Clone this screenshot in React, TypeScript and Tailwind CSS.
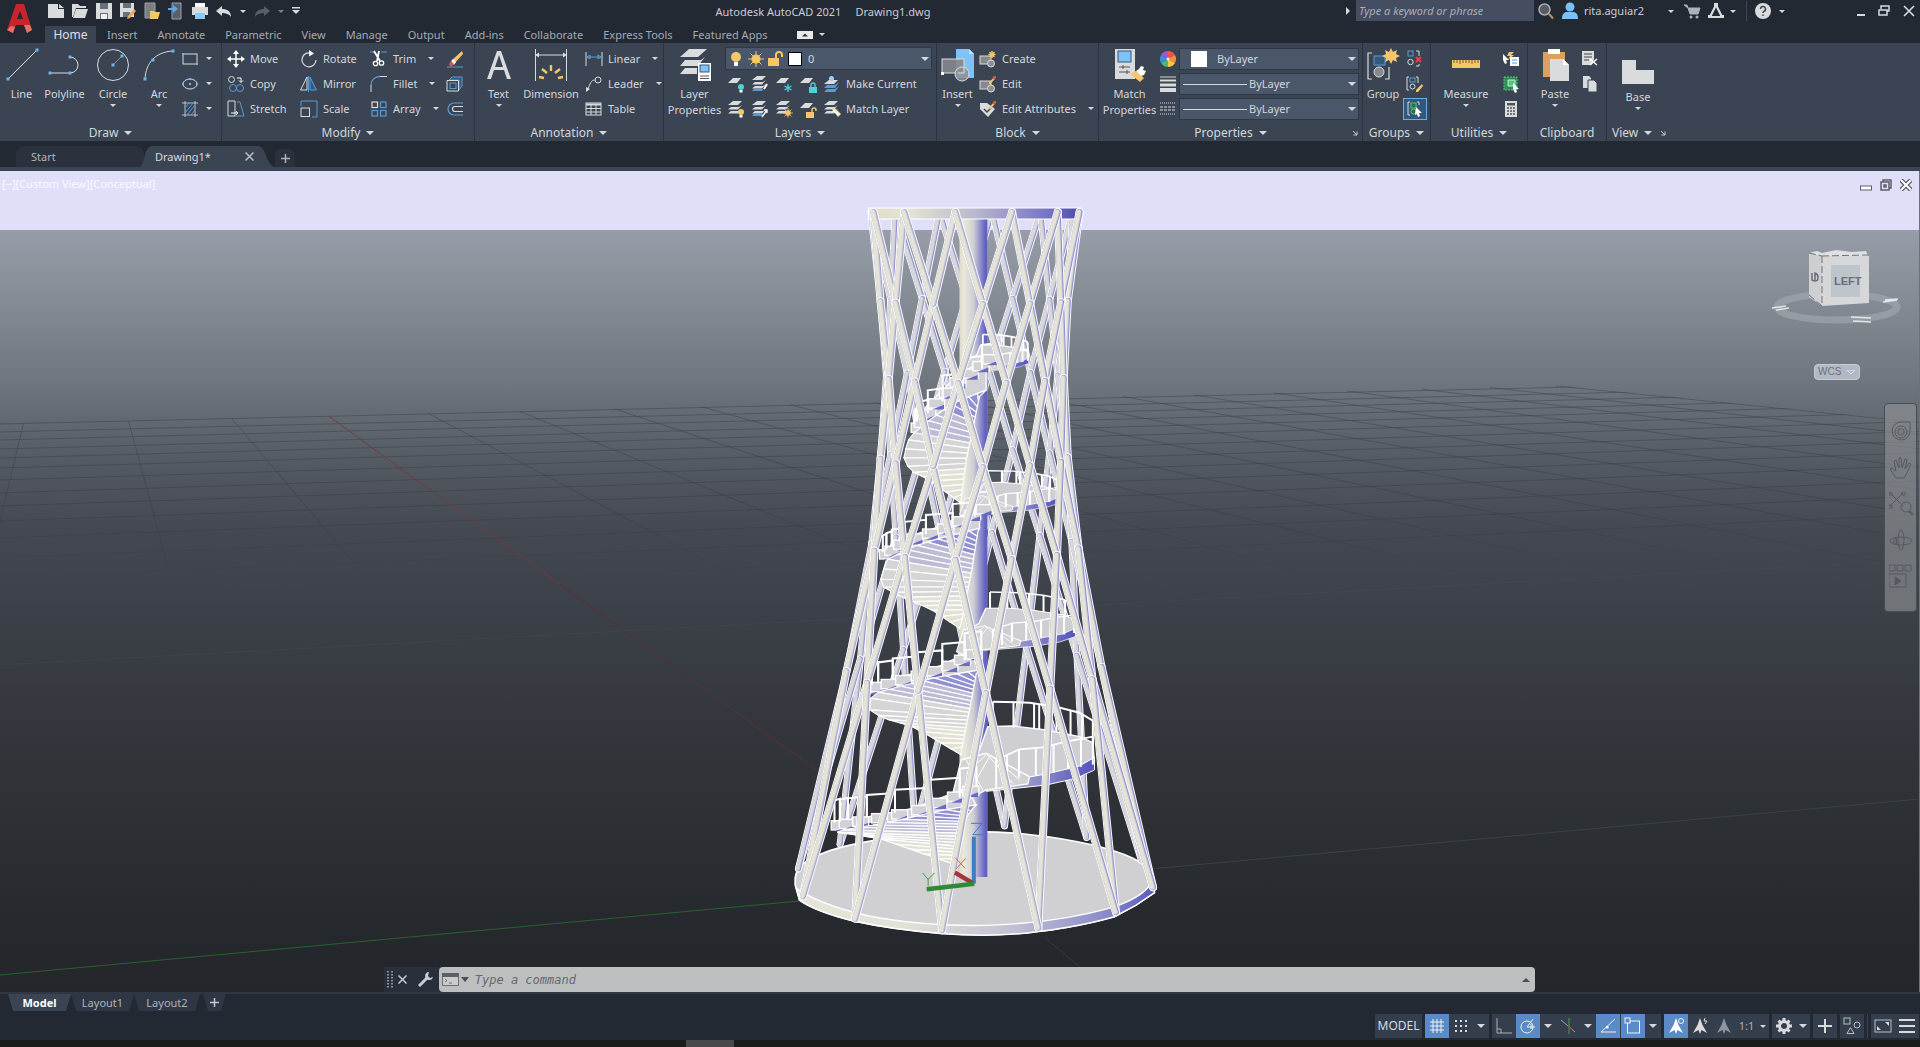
import React from "react";

type Pt = [number, number];
type Kids = { children?: React.ReactNode };

/* ---------- shared bits ---------- */

const G = "#d9dbdd";
const B = "#5b9bd5";
const Y = "#f5c66a";

function Ic({ s = 16, children }: Kids & { s?: 16 | 32 }) {
  const size = s === 32 ? "size-8" : "size-4";
  return (
    <svg viewBox={s === 32 ? "0 0 32 32" : "0 0 16 16"} className={`${size} shrink-0 overflow-visible`} fill="none" stroke="none" aria-hidden="true">
      {children}
    </svg>
  );
}

function Arrow({ big = false }: { big?: boolean }) {
  return big ? (
    <svg viewBox="0 0 8 4" className="h-1 w-2 shrink-0" aria-hidden="true"><path d="M0 0h8L4 4z" fill="#d5d9de" /></svg>
  ) : (
    <svg viewBox="0 0 6 3" className="h-[3px] w-1.5 shrink-0" aria-hidden="true"><path d="M0 0h6L3 3z" fill="#d5d9de" /></svg>
  );
}

function Panel({ title, width, children, noArrow, launcher }: Kids & { title: string; width: string; noArrow?: boolean; launcher?: boolean }) {
  return (
    <section aria-label={title} className={`${width} flex shrink-0 flex-col border-r border-[#2a323e] pt-[3px]`}>
      <div className="flex h-[76px]">{children}</div>
      <div className="relative flex h-[19px] items-center justify-center pt-0.5 text-[12px]">
        <button type="button" className="flex items-center gap-1.5 whitespace-nowrap">
          {title}
          {!noArrow && <Arrow big />}
        </button>
        {launcher && (
          <button type="button" aria-label={`${title} settings`} className="absolute right-1">
            <svg viewBox="0 0 6 6" className="size-1.5"><path d="M1 1l4 4M5 1.500v3.500H1.500" stroke="#c8ccd2" fill="none" /></svg>
          </button>
        )}
      </div>
    </section>
  );
}

function Big({ label, width, arrow, icon }: { label: string[]; width: string; arrow?: boolean; icon: React.ReactNode }) {
  return (
    <button type="button" className={`${width} flex shrink-0 flex-col items-center pt-[3px] text-[11px]`}>
      {icon}
      <span className="mt-[5px] flex flex-col whitespace-nowrap leading-4">
        {label.map((l) => <span key={l}>{l}</span>)}
      </span>
      {arrow && <span className="mt-0.5"><Arrow /></span>}
    </button>
  );
}

function Row({ icon, label, arrow, gap = "gap-1.5" }: { icon: React.ReactNode; label?: string; arrow?: boolean; gap?: string }) {
  return (
    <button type="button" className={`flex h-[25px] items-center whitespace-nowrap ${gap}`} aria-label={label ?? "tool"}>
      {icon}
      {label && <span>{label}</span>}
      {arrow && <span className={label ? "ml-1.5" : ""}><Arrow /></span>}
    </button>
  );
}

const Col = ({ width, children }: Kids & { width: string }) => <div className={`${width} flex shrink-0 flex-col items-start`}>{children}</div>;

/* ---------- icons ---------- */

const dot = (x: number, y: number, r = 1) => <rect key={`${x}-${y}`} x={x - r} y={y - r} width={2 * r} height={2 * r} fill="#6db3ee" />;

const LineI = <Ic s={32}><path d="M2 30L31 1" stroke={G} />{dot(2, 30, 1.5)}{dot(31, 1, 1.5)}</Ic>;
const PolyI = <Ic s={32}><path d="M0 24h21a8 8 0 0 0 0-16" stroke={G} />{dot(1, 24, 1.5)}{dot(21, 24, 1.5)}{dot(21, 8, 1.5)}</Ic>;
const CircI = <Ic s={32}><circle cx="16" cy="16" r="15.500" stroke={G} /><path d="M16 16l9-9" stroke={B} />{dot(16, 16, 1.5)}{dot(25, 7, 1.5)}</Ic>;
const ArcI = <Ic s={32}><path d="M2 30C3 14 12 3 30 2" stroke={G} />{dot(2, 30, 1.5)}{dot(10, 11, 1.5)}{dot(30, 2, 1.5)}</Ic>;
const RectI = <Ic><rect x="1" y="3" width="14" height="10" stroke={G} />{dot(1, 3)}{dot(15, 13)}</Ic>;
const EllI = <Ic><ellipse cx="8" cy="8" rx="7" ry="5" stroke={G} />{dot(8, 8)}{dot(1, 8)}{dot(15, 8)}{dot(8, 3)}</Ic>;
const HatchI = <Ic><path d="M3 0v16M13 0v16M0 2h16M0 14h16" stroke={G} strokeWidth=".8" /><path d="M3 7l4-5M3 12l8-10M5 14l8-10M9 14l4-5" stroke={B} /></Ic>;
const MoveI = <Ic><path d="M8 1v14M1 8h14" stroke="#fff" strokeWidth="1.500" /><path d="M8-1l3 4H5zM8 17l3-4H5zM-1 8l4-3v6zM17 8l-4-3v6z" fill="#fff" /></Ic>;
const RotI = <Ic><path d="M11 2.500A7 7 0 1 0 15 9" stroke={G} strokeWidth="1.200" /><path d="M8-1l5 3.500-5 3z" fill="#fff" /></Ic>;
const TrimI = <Ic><path d="M-1 1h4M10 1h6" stroke={B} /><path d="M3 0l6 10M8 0L6 10" stroke="#fff" strokeWidth="1.800" /><circle cx="4.500" cy="12.500" r="2.200" stroke="#fff" strokeWidth="1.300" /><circle cx="10.500" cy="12" r="2.200" stroke="#fff" strokeWidth="1.300" /></Ic>;
const EraseI = <Ic><path d="M0 16h16" stroke={B} /><path d="M15 0l1 3-9 10-3-3z" fill={Y} /><path d="M6 8l3 3-2 3-3-3z" fill="#fff" /><path d="M4 10l3 3-2 2H3l-1-2z" fill="#e0564d" /></Ic>;
const CopyI = <Ic><circle cx="3.500" cy="3.500" r="3" stroke={G} /><circle cx="5" cy="12" r="3.500" stroke={B} /><circle cx="12" cy="12" r="3.500" stroke={B} /><path d="M9 2h4v4M11 4.500l2 2 2-2" stroke="#fff" /></Ic>;
const MirrorI = <Ic><path d="M6 1v13H-.5z" stroke={G} /><path d="M9 1v13h6.500z" stroke={B} fill="#35597d" /><path d="M7.500 0v16" stroke={B} /></Ic>;
const FilletI = <Ic><path d="M0 16V9M9 .5h7" stroke={G} /><path d="M0 9C0 4 4 .5 9 .5" stroke={B} strokeWidth="1.300" /></Ic>;
const BoxI = <Ic><path d="M2 4l3-3h10v9l-3 4V4z" stroke={B} fill="#35597d" /><path d="M0 4.500h11.500V15H0z" stroke={G} fill="#3b4453" /><rect x="3" y="7" width="6" height="5.500" stroke={B} /></Ic>;
const StretchI = <Ic><path d="M0 0h7v15H0z" stroke={G} /><path d="M9 1h3l4 14H7" stroke={B} /><path d="M3 12h7M8 10l2 2-2 2" stroke="#fff" /></Ic>;
const ScaleI = <Ic><path d="M0 5V0h16v16h-5" stroke={B} /><rect x="0" y="7" width="8.500" height="8.500" stroke={G} /></Ic>;
const ArrayI = <Ic><rect x="1" y="1" width="5.500" height="5.500" stroke={G} strokeWidth="1.200" /><rect x="9.500" y="1" width="5.500" height="5.500" stroke={B} strokeWidth="1.200" /><rect x="1" y="9.500" width="5.500" height="5.500" stroke={B} strokeWidth="1.200" /><rect x="9.500" y="9.500" width="5.500" height="5.500" stroke={B} strokeWidth="1.200" /></Ic>;
const OffsetI = <Ic><path d="M16 2H7a6 6 0 0 0 0 12h9" stroke={B} strokeWidth="1.200" /><path d="M16 5.500H8a2.500 2.500 0 0 0 0 5h8" stroke={G} strokeWidth="1.200" /></Ic>;
const TextI = <Ic s={32}><path d="M4 30L14 2h4l10 28h-4l-3-9H11l-3 9zM12 18h8l-4-12z" fill={G} /></Ic>;
const DimI = <Ic s={32}><path d="M.5 0v32M31.500 0v32M2 6h28" stroke={G} /><path d="M0 6l4-2.500v5zM32 6l-4-2.500v5z" fill={G} /><path d="M4 28l5 1M7 20l5 4M16 16v6M25 20l-5 4M28 28l-5 1" stroke={Y} strokeWidth="2.400" /></Ic>;
const LinearI = <Ic><path d="M0 1v14M16 1v14" stroke={G} /><path d="M1 6h14M1 6l3-2v4zM15 6l-3-2v4z" stroke={B} /></Ic>;
const LeaderI = <Ic><circle cx="12" cy="4" r="3" stroke={G} /><path d="M9 4C5 4 4 8 2 13" stroke={G} /><path d="M0 16v-5l4 2z" fill={G} /></Ic>;
const TableI = <Ic><rect x="0" y="2" width="15" height="12" stroke={G} /><path d="M0 3.500h15" stroke={G} strokeWidth="2" /><path d="M0 7.500h15M0 11h15M5 4v10M10 4v10" stroke={G} /></Ic>;
const LayerPropI = (
  <Ic s={32}>
    <path d="M10 0h18l-9 8H1z" fill={G} /><path d="M6 11h16l4-3-7 9H1z" fill={G} /><path d="M6 19h12v6H1z" fill={G} />
    <rect x="19" y="14" width="13" height="18" fill="#fff" /><rect x="21" y="16" width="9" height="7" fill="#7ec2f7" stroke="#35597d" /><path d="M21 27h9M21 29.500h9" stroke="#555" />
  </Ic>
);
const Sheet = <path d="M5 2h8L9 7H0z" fill={G} />;
const Stack = <><path d="M5 0h9l-4 4H0z" fill={G} /><path d="M3 6h8l3-2-4 4.500H0zM3 10h8l3-2-4 4.500H0z" fill={G} /></>;
const Bulb = ({ c }: { c: string }) => <><circle cx="13" cy="11" r="3" fill={c} /><rect x="11.500" y="14" width="3" height="2.500" fill="#fff" /></>;
const Lock = ({ c }: { c: string }) => <><rect x="9" y="11" width="8" height="6" fill={c} /><path d="M11 11V9a2 2 0 0 1 4 0v2" stroke={c} strokeWidth="1.400" /></>;
const layerRow1 = [
  <Ic key="a">{Sheet}<Bulb c="#4dd2d8" /></Ic>,
  <Ic key="b">{Stack}<path d="M2 13h9l3-4-4 6H0z" fill={B} /><path d="M15 8l-3 5" stroke="#fff" strokeWidth="2" /></Ic>,
  <Ic key="c">{Sheet}<path d="M12 8v8M8.500 10l7 4M15.500 10l-7 4" stroke="#4dd2d8" strokeWidth="1.300" /></Ic>,
  <Ic key="d">{Sheet}<Lock c="#4dd2d8" /></Ic>,
];
const layerRow2 = [
  <Ic key="a">{Stack}<Bulb c={Y} /></Ic>,
  <Ic key="b">{Stack}<path d="M2 13h9l3-4-4 6H0z" fill={B} /><path d="M10 16l5-7M12 9h3v3" stroke="#fff" strokeWidth="1.300" /></Ic>,
  <Ic key="c">{Stack}<circle cx="12" cy="12" r="2.800" fill={Y} /><path d="M12 7v10M7 12h10M8.500 8.500l7 7M15.500 8.500l-7 7" stroke={Y} strokeWidth=".8" /></Ic>,
  <Ic key="d">{Sheet}<rect x="6" y="11" width="8" height="6" fill={Y} /><path d="M12 11V9a2 2 0 0 1 4 0v1" stroke={Y} strokeWidth="1.400" /></Ic>,
];
const MakeI = <Ic><path d="M5 4h9l-4 4H0z" fill={G} /><path d="M3 9h8l4-3-4 6H0z" fill={B} /><path d="M3 13h8l4-3-4 6H0z" fill={B} /><circle cx="7.500" cy="2.500" r="2.500" fill="#9fd0f7" /></Ic>;
const MatchLI = <Ic>{Stack}<path d="M8 8l3-1 6 6-3 3z" fill="#f2d9a0" /><path d="M9 9l6 5" stroke="#fff" strokeWidth="2" /></Ic>;
const InsertI = <Ic s={32}><path d="M14 0h13l5 5v24H14z" fill="#7ec2f7" /><path d="M27 0v5h5z" fill="#cde6fb" /><rect x="0" y="10" width="22" height="14" fill="#85888c" fillOpacity=".9" stroke={G} /><circle cx="20" cy="25" r="7" fill="#8d9095" fillOpacity=".85" stroke={G} /><path d="M16 24h6v-6" stroke={G} /><rect x="-1" y="23" width="3" height="3" fill="#fff" /></Ic>;
const blockBase = <><rect x="0" y="5" width="11" height="8" fill="#85888c" stroke={G} /><circle cx="11" cy="12.500" r="3.500" fill="#8d9095" stroke={G} /></>;
const CreateI = <Ic>{blockBase}<path d="M12 0v7M8.500 3.500h7M9.500 1l5 5M14.500 1l-5 5" stroke={Y} strokeWidth="1.400" /></Ic>;
const pencil = <><path d="M15 0l1 1.500-6 7-1.500-1.500z" fill={Y} /><path d="M13.500 0l2.500 1-1.500 3-2-1.500z" fill="#e0564d" /></>;
const EditI = <Ic>{blockBase}{pencil}</Ic>;
const AttrI = <Ic><path d="M0 2h7l8 6-7 8-8-8z" fill={G} /><path d="M4 8l3 3 4-4" stroke="#444b57" strokeWidth="1.500" />{pencil}</Ic>;
const MatchI = <Ic s={32}><rect x="1" y="0" width="20" height="30" fill={G} /><rect x="4" y="2" width="13" height="11" fill="#7ec2f7" stroke="#35597d" /><path d="M5 18h11M5 23h11M9 16v4M13 21v4" stroke="#555" /><path d="M16 25l6-3 8 7-4 4z" fill={Y} /><path d="M22 22l3-2 2-3 3 1-1 3 3 1-2 4-3 1z" fill="#fff" /></Ic>;
const WheelI = (
  <Ic>
    {[["#f0554b", 0], ["#f58f3c", 60], ["#f4c93f", 120], ["#4fb86a", 180], ["#3f8fe0", 240], ["#9a5bd0", 300]].map(([c, a]) => (
      <path key={c as string} d="M8 8V0a8 8 0 0 1 6.930 4z" fill={c as string} transform={`rotate(${a} 8 8)`} />
    ))}
    <circle cx="8" cy="8" r="1.500" fill="#f3efe6" />
  </Ic>
);
const WeightI = <Ic><path d="M0 1h16" stroke={G} /><path d="M0 4.500h16" stroke={G} strokeWidth="2" /><path d="M0 9h16" stroke={G} strokeWidth="3" /><path d="M0 14h16" stroke={G} strokeWidth="4" /></Ic>;
const TypeI = <Ic><path d="M0 2h16M0 13h16" stroke={G} strokeDasharray="1 1" /><path d="M0 6h16M0 9h16" stroke={G} strokeDasharray="3 1" /></Ic>;
const GroupI = <Ic s={32}><path d="M5 4H1v26h4M18 30h4V18" stroke={G} strokeWidth="1.200" /><rect x="7" y="7" width="11" height="9" fill="#35597d" stroke={B} /><circle cx="12" cy="23" r="5" fill="#85888c" stroke={G} /><path d="M24-1l2 4 4-2-1 4 4 2-4 2 1 4-4-2-2 4-2-4-4 2 1-4-4-2 4-2-1-4 4 2z" fill={Y} /></Ic>;
const UngI = <Ic><rect x="1" y="0" width="5" height="5" stroke={B} /><circle cx="3.500" cy="11" r="2.700" stroke={G} /><path d="M9 0h3v5M9 15h3v-2" stroke={G} /><path d="M9 6l5 5M14 6l-5 5" stroke="#e8404a" strokeWidth="2" /></Ic>;
const GedI = <Ic><path d="M2 1H0v13h2M9 1h2v6" stroke={G} /><rect x="3" y="2" width="5" height="4" stroke={B} /><circle cx="5.500" cy="10.500" r="2.500" stroke={G} /><path d="M15 8l1 2-5 6-2 0 0-2z" fill={Y} /></Ic>;
const GselI = <Ic><path d="M3 1H1v13h2M10 1h2v3" stroke={G} /><rect x="4" y="2" width="5" height="5" stroke="#52c47a" fill="#2d6b49" /><circle cx="6.500" cy="10.500" r="2.500" stroke="#52c47a" fill="#2d6b49" /><path d="M9 6l6 6-3 0 1 3-2 1-1-3-2 1z" fill="#fff" /></Ic>;
const MeasI = <Ic s={32}><rect x="2" y="11" width="28" height="8" fill={Y} /><path d="M4 11v3M7 11v3M10 11v4M13 11v3M16 11v3M19 11v3M22 11v4M25 11v3M28 11v3" stroke="#7a5a20" /></Ic>;
const QselI = <Ic><path d="M6 1l5 0-3 3 3 0-6 5 2-4H4z" fill={Y} /><rect x="7" y="6" width="9" height="9" fill="#fff" /><path d="M9 9h5M9 12h5" stroke={B} /><path d="M0 3l6 6-3 0 1 3-2 1-2-4z" fill="#fff" /></Ic>;
const SelI = <Ic><rect x="1" y="1" width="13" height="13" fill="#2f8a56" stroke="#52c47a" strokeDasharray="2 1" /><path d="M5 4h7v6H5z" fill="#52c47a" stroke="#bff0d0" /><path d="M10 7l6 6-3 0 1 3-2 1-2-4z" fill="#fff" /></Ic>;
const CalcI = <Ic><rect x="2" y="0" width="12" height="16" fill={G} /><rect x="4" y="2" width="8" height="2.500" fill="#555" /><path d="M4 7h8M4 10h8M4 13h8" stroke="#555" strokeWidth="1.500" strokeDasharray="2 1" /></Ic>;
const PasteI = <Ic s={32}><rect x="4" y="3" width="22" height="25" fill="#d9a05f" /><rect x="9" y="0" width="12" height="5" fill="#fff" /><path d="M11 10h13l6 6v16H11z" fill={G} /><path d="M24 10v6h6z" fill="#fff" /></Ic>;
const CutI = <Ic><path d="M0 0h12v9l-3 5H0z" fill={G} /><path d="M2 3h8M2 6h8M2 9h5" stroke="#444" /><path d="M8 8l7 6M15 8l-7 6" stroke="#fff" strokeWidth="1.400" /></Ic>;
const Copy2I = <Ic><path d="M1 0h6l2 2v10H1z" fill={G} /><path d="M6 4h6l3 3v9H6z" fill={G} stroke="#3b4453" /></Ic>;
const BaseI = <Ic s={32}><path d="M0 8h14v10h18v14H0z" fill={G} /></Ic>;

/* quick access tools */
const qat = [
  ["New", <Ic key="n"><path d="M0 1h10v5h6v9H0z" fill={G} /><path d="M11 1l5 4h-5z" fill={G} /></Ic>],
  ["Open", <Ic key="o"><path d="M0 1h6l2 2h6v2H4L1 14H0z" fill={G} /><path d="M4 6h12l-3 9H1z" fill={G} /></Ic>],
  ["Save", <Ic key="s"><path d="M0 0h16v16H0z" fill={G} /><path d="M4 0h8v6H4zM4 10h8v6H4z" fill="#6b7178" /><path d="M5 11h6v5H5z" fill="#eee" /></Ic>],
  ["Save As", <Ic key="sa"><path d="M0 0h14v14H0z" fill={G} /><path d="M3 0h8v5H3zM3 9h7v5H3z" fill="#6b7178" /><path d="M14 6l2 2-6 7-3 1 1-3z" fill="#eaa95c" /></Ic>],
  ["Open from Web", <Ic key="ow"><path d="M1 0h10v15H1z" fill="#7a7f86" stroke="#9ca1a8" /><path d="M6 8h4l1 1h5l-2 7H6z" fill={Y} /></Ic>],
  ["Save to Web", <Ic key="sw"><path d="M4 0h9v16H4z" fill="#59606a" stroke="#9ca1a8" /><path d="M0 5h5V2l5 4-5 4V7H0z" fill="#5aa9ea" /></Ic>],
  ["Plot", <Ic key="p"><path d="M3 0h10v4H3z" fill="#fff" /><path d="M0 4h16v8H0z" fill={G} /><path d="M3 10h10v6H3z" fill="#8cc8f5" /></Ic>],
] as [string, React.ReactNode][];

/* ---------- tower model ---------- */

const LV = [
  { y: 212, r: 106, b: 0 },
  { y: 301, r: 94, b: 3 },
  { y: 377, r: 90, b: 6 },
  { y: 458, r: 94, b: 9 },
  { y: 546, r: 105, b: 14 },
  { y: 669, r: 128, b: 24 },
  { y: 878, r: 180, b: 53 },
];

function node(l: number, deg: number): Pt {
  const a = (deg * Math.PI) / 180;
  const v = LV[l];
  return [975 + v.r * Math.sin(a) * (1 + 0.04 * Math.cos(a)), v.y + v.b * Math.cos(a)];
}

type Bar = { a: Pt; b: Pt; depth: number; side: number };
const bars: Bar[] = [];
for (let l = 0; l < 6; l++) {
  for (let k = 0; k < 12; k++) {
    const t = (l % 2 === 0 ? -10 : 5) + 30 * k;
    for (const d of [-15, 15]) {
      const m = ((t + d / 2) * Math.PI) / 180;
      bars.push({ a: node(l, t), b: node(l + 1, t + d), depth: Math.cos(m), side: Math.sin(m) });
    }
  }
}
bars.sort((p, q) => p.depth - q.depth);

function BarLine({ bar }: { bar: Bar }) {
  const { a, b, depth, side } = bar;
  const back = depth < 0;
  const w = back ? 7 : 8;
  const line = (dx: number, c: string, sw: number) => (
    <line x1={a[0] + dx} y1={a[1]} x2={b[0] + dx} y2={b[1]} stroke={c} strokeWidth={sw} strokeLinecap="round" />
  );
  const shade = back || side > 0.5 ? "#8f8ed0" : "#a5a4d0";
  return (
    <g>
      {line(0, "#f8f8ff", w)}
      {line(0, shade, w - 2)}
      {line(-0.5, "#c9c9d4", w - 3)}
      {line(-1, back ? "#d8d8da" : "#e4e3d6", w - 4)}
    </g>
  );
}

function along(p: Pt[], t: number): Pt {
  const len: number[] = [0];
  for (let i = 1; i < p.length; i++) len.push(len[i - 1] + Math.hypot(p[i][0] - p[i - 1][0], p[i][1] - p[i - 1][1]));
  const d = t * len[len.length - 1];
  let i = 1;
  while (i < p.length - 1 && len[i] < d) i++;
  const f = (d - len[i - 1]) / (len[i] - len[i - 1]);
  return [p[i - 1][0] + f * (p[i][0] - p[i - 1][0]), p[i - 1][1] + f * (p[i][1] - p[i - 1][1])];
}
const pts = (p: Pt[]) => p.map((q) => q.join(",")).join(" ");

/* a flight seen from below on the left of the column, with treads and railing above */
function Flight({ outer, inner, top, n, rail }: { outer: Pt[]; inner: Pt[]; top: Pt[]; n: number; rail: number }) {
  const idx = Array.from({ length: n + 1 }, (_, i) => i / n);
  const steps = [0, 0.06, 0.16, 0.3, 0.45, 0.6, 0.75, 0.88, 1];
  const posts = [0, 0.04, 0.1, 0.24, 0.45, 0.72, 0.95];
  return (
    <g>
      <polygon points={pts([...top, ...outer.slice(0, 3)])} fill="#d2d2d6" stroke="#fff" strokeWidth={4} />
      {steps.map((t) => {
        const [x, y] = along(top, t);
        return (
          <g key={t}>
            <rect x={x - 10} y={y - 6} width={48} height={28} fill="#d2d2d6" stroke="#fff" strokeWidth={4} />
            <path d={`M${x} ${y + 26}h36v-14z`} fill="#6a69c4" />
          </g>
        );
      })}
      {posts.map((t, i) => {
        const [x, y] = along(top, t);
        const nx = i < posts.length - 1 ? along(top, posts[i + 1])[0] : x + 50;
        return <path key={t} d={`M${x} ${y}v${-rail}L${nx} ${y - rail - 6}v${rail * 0.9}`} fill="none" stroke="#fff" strokeWidth={6} />;
      })}
      {idx.slice(0, -1).map((t, i) => {
        const u = idx[i + 1];
        const fill = t < 0.25 ? "#9291cf" : t < 0.45 ? "#bdbcd4" : t < 0.7 ? "#d6d5d6" : "#e3e1d3";
        return <polygon key={t} points={pts([along(outer, t), along(outer, u), along(inner, u), along(inner, t)])} fill={fill} stroke="#fff" strokeWidth={3.5} />;
      })}
    </g>
  );
}

/* landing on the right of the column */
function Landing({ heavy = 1 }: { heavy?: number }) {
  const back: Pt[] = [[640, 425], [750, 428], [830, 440], [900, 458], [940, 482]];
  const front: Pt[] = [[650, 600], [720, 568], [790, 562], [860, 545], [940, 530]];
  return (
    <g>
      <polygon points="560,600 600,570 625,500 700,498 800,510 900,530 940,548 945,605 900,632 800,655 700,668 620,675 560,650" fill="#cfcfd3" stroke="#fff" strokeWidth={4 * heavy} />
      <polygon points="620,672 700,660 800,642 900,618 945,592 945,630 890,655 800,675 700,686 620,694" fill="url(#rim)" stroke="#fff" strokeWidth={3} />
      <polygon points="545,600 620,580 750,650 745,672 620,690 560,720 520,700" fill="#d4d3d4" stroke="#fff" strokeWidth={4} />
      <path d="M560 640l60-55M590 660l40-70M620 580l80 90M640 590l80 70M560 600l50 90" stroke="#fff" strokeWidth={3} fill="none" />
      <polyline points={pts(back)} fill="none" stroke="#fff" strokeWidth={6 * heavy} />
      {[0, 0.2, 0.4, 0.45, 0.62, 0.76, 0.88, 1].map((t) => {
        const [x, y] = along(back, t);
        return <line key={t} x1={x} y1={y} x2={x} y2={y + 76} stroke="#fff" strokeWidth={6 * heavy} />;
      })}
      <polyline points={pts(front)} fill="none" stroke="#fff" strokeWidth={5 * heavy} />
      {[0, 0.12, 0.25, 0.42, 0.6, 0.75, 0.88, 1].map((t) => {
        const [x, y] = along(front, t);
        return <line key={t} x1={x} y1={y} x2={x} y2={y + 84} stroke="#fff" strokeWidth={6 * heavy} />;
      })}
    </g>
  );
}

function Tower() {
  return (
    <g>
      <g transform="translate(780 560) scale(.33333)">
        <path d="M47 955C50 920 80 900 130 880C200 850 330 832 450 820C560 812 680 815 760 825C880 838 1000 865 1060 895C1100 915 1118 940 1118 965L1125 998L1070 1035L1005 1070C900 1100 800 1112 778 1114C680 1128 580 1128 483 1120C380 1112 300 1100 222 1083C140 1062 90 1042 60 1020L47 975z" fill="#d0d0d3" stroke="#fff" strokeWidth={5} />
        <path d="M50 985C110 1025 200 1055 300 1074C420 1094 520 1098 620 1096C760 1092 900 1070 1000 1042C1060 1022 1100 1000 1118 965L1125 998L1070 1035L1005 1070C900 1100 800 1112 778 1114C680 1128 580 1128 483 1120C380 1112 300 1100 222 1083C140 1062 90 1042 60 1020z" fill="url(#base)" stroke="#fff" strokeWidth={4} />
      </g>
      {bars.filter((b) => b.depth < 0).map((b, i) => <BarLine key={i} bar={b} />)}
      <rect x="960" y="219" width="28" height="658" fill="url(#column)" />
      <g transform="translate(780 560) scale(.33333)">
        <g transform="translate(322 -855) scale(.45 .42)"><Landing heavy={2} /></g>
        <g transform="translate(176 -472) scale(.7 .48)"><Landing heavy={1.5} /></g>
        <g transform="translate(94 -180) scale(.84 .65)"><Landing heavy={1.2} /></g>
        <Landing />
        <Flight n={20} rail={44} top={[[405, -405], [440, -460], [520, -540], [620, -610]]}
          outer={[[620, -510], [520, -470], [450, -420], [390, -370], [372, -310], [390, -270], [450, -240], [545, -170]]} inner={[[600, -490], [560, -300], [545, -180]]} />
        <Flight n={20} rail={48} top={[[310, -25], [370, -65], [480, -100], [600, -160]]}
          outer={[[600, -95], [480, -65], [400, -40], [320, 0], [300, 75], [375, 115], [450, 145], [540, 205]]} inner={[[595, -85], [575, 40], [545, 190]]} />
        <Flight n={20} rail={62} top={[[265, 378], [360, 352], [480, 318], [570, 275]]}
          outer={[[600, 330], [470, 352], [370, 377], [275, 402], [270, 455], [330, 480], [400, 500], [470, 540], [545, 585]]} inner={[[590, 342], [572, 440], [545, 572]]} />
        <Flight n={18} rail={66} top={[[165, 788], [280, 768], [400, 745], [560, 685]]}
          outer={[[590, 735], [480, 752], [340, 785], [160, 815], [230, 825], [300, 835], [400, 870], [520, 912]]} inner={[[580, 745], [540, 800], [515, 905]]} />
      </g>
      <rect x="869" y="208" width="212" height="11" fill="url(#ring)" stroke="#fff" />
      {bars.filter((b) => b.depth >= 0).map((b, i) => <BarLine key={i} bar={b} />)}
      <g transform="translate(780 560) scale(.33333)" strokeLinecap="square">
        <path d="M583 836V965" stroke="#3d7cc0" strokeWidth={12} />
        <path d="M532 941L574 966" stroke="#a8343a" strokeWidth={13} />
        <path d="M448 987L578 972" stroke="#2f8a35" strokeWidth={13} />
        <g fill="none" strokeWidth={3}>
          <path d="M576 790H608L580 824H610" stroke="#3d7cc0" />
          <path d="M528 894L556 924M558 896L530 926" stroke="#d0605c" />
          <path d="M430 940L446 958L464 940M446 958V976" stroke="#4a9a4e" />
        </g>
      </g>
    </g>
  );
}

/* ---------- ground grid ---------- */

const rows = [424, 432, 440, 449, 458, 468, 480, 493, 506, 521, 538, 558, 578, 602];
const cols: [number, number][] = [
  [24, -4.2], [129, 3.7], [232, 1.18], [429, 0.53], [520, 0.41], [615, 0.33], [702, 0.276], [790, 0.25], [875, 0.23], [960, 0.21],
  [1043, 0.195], [1123, 0.18], [1194, 0.165], [1274, 0.15], [1348, 0.135], [1422, 0.12], [1490, 0.11], [1556, 0.1],
];

function Scene() {
  return (
    <svg viewBox="0 171 1920 821" preserveAspectRatio="xMidYMid slice" className="absolute inset-0 h-full w-full" role="img" aria-label="Lattice tower with spiral stairs">
      <defs>
        <linearGradient id="fade" gradientUnits="userSpaceOnUse" x1="0" y1="400" x2="0" y2="600">
          <stop offset="0" stopColor="#3c4148" stopOpacity=".5" /><stop offset=".5" stopColor="#31363d" stopOpacity=".4" /><stop offset="1" stopColor="#31363d" stopOpacity="0" />
        </linearGradient>
        <linearGradient id="column"><stop offset="0" stopColor="#dddccb" /><stop offset=".15" stopColor="#eae9da" /><stop offset=".5" stopColor="#cfcfd3" /><stop offset=".75" stopColor="#8e8dcb" /><stop offset=".95" stopColor="#5a59c0" /><stop offset="1" stopColor="#7c7bcc" /></linearGradient>
        <linearGradient id="ring"><stop offset="0" stopColor="#e0dfcd" /><stop offset=".2" stopColor="#e3e2d4" /><stop offset=".5" stopColor="#b9b8cc" /><stop offset=".85" stopColor="#7573c6" /><stop offset="1" stopColor="#4b49ab" /></linearGradient>
        <linearGradient id="base"><stop offset="0" stopColor="#e6e5d8" /><stop offset=".3" stopColor="#e2e1d8" /><stop offset=".6" stopColor="#c2c1d2" /><stop offset=".85" stopColor="#8f8ecb" /><stop offset="1" stopColor="#5a59bd" /></linearGradient>
        <linearGradient id="rim"><stop offset="0" stopColor="#c2c1d6" /><stop offset="1" stopColor="#5452bb" /></linearGradient>
        <clipPath id="ground"><polygon points="0,423 1556,385 1920,422 1920,992 0,992" /></clipPath>
      </defs>
      <g clipPath="url(#ground)" strokeWidth="1">
        {rows.map((y) => <path key={y} d={`M0 ${y}L1920 ${y - 1920 * (0.0235 + (y - 424) * 0.000124)}`} stroke="url(#fade)" />)}
        {cols.map(([x, s]) => {
          const y0 = 424 - x * 0.0245;
          return <path key={x} d={`M${x} ${y0}L${x + 260 / s} ${y0 + 260}`} stroke="url(#fade)" />;
        })}
        <path d="M0 665L1920 560" stroke="#4a4f57" strokeOpacity=".35" />
        <path d="M329 416L560 584" stroke="#74393f" />
        <path d="M560 584L960 874" stroke="#5c2f37" />
        <path d="M0 975L800 901" stroke="#2a6130" />
        <path d="M1150 869L1920 799" stroke="#3a4149" />
        <path d="M1046 938L1110 992" stroke="#363c44" />
      </g>
      <Tower />
    </svg>
  );
}

function ViewCube() {
  return (
    <svg viewBox="0 0 140 78" className="h-[78px] w-[140px]" role="img" aria-label="View cube">
      <ellipse cx="70" cy="58" rx="60" ry="13" fill="none" stroke="#a7adb5" strokeOpacity=".55" strokeWidth="7" />
      <path d="M5 59l14-2M9 61l13-2M84 68l20 1M86 72l18 1M118 51l13-1M116 53l14-2" stroke="#e4e6e9" strokeWidth="1.500" />
      <path d="M42 4l13 4v49l-13-9z" fill="#cdcfd1" />
      <path d="M42 4l8-2 5 2 14-3 16 2 14-1 2 5-46 1z" fill="#dfe0e1" />
      <path d="M55 7h47v47l-47 3z" fill="#d6d7d8" />
      <rect x="64" y="16" width="29" height="32" fill="#bdc4ca" />
      <path d="M42 4l13 3M55 7v50M55 7l46-1M42 46l13 11" stroke="#6f757c" strokeDasharray="7 3" fill="none" />
      <text x="67" y="36" fontSize="11" fontWeight="700" fill="#65707c" className="font-['Liberation_Sans']">LEFT</text>
      <path d="M45 24v7l2 1M48 24c4 1 4 8 0 8z" stroke="#65707c" strokeWidth="1.500" fill="none" />
    </svg>
  );
}

const navIcons = [
  <svg key="w" viewBox="0 0 24 24" className="size-6" fill="none"><path d="M12 2h9v8a9 9 0 1 1-9-8z" /><circle cx="12" cy="12" r="6" /><rect x="9" y="9" width="6" height="6" rx="2" /></svg>,
  <svg key="h" viewBox="0 0 24 24" className="size-6" fill="none"><path d="M7 22L1 13l2-1 4 3L5 5l2-1 3 8V2h2l1 10 3-9 2 1-2 9 4-6 2 1-4 9-3 5z" /></svg>,
  <svg key="z" viewBox="0 0 24 24" className="size-6" fill="none"><path d="M1 1l13 13M14 1L1 14" /><circle cx="17" cy="15" r="5" /><path d="M20 19l4 4" strokeWidth="2" /><path d="M0 0h3v3H0zM13 0h3v3h-3zM0 13h3v3H0z" /></svg>,
  <svg key="o" viewBox="0 0 24 24" className="size-6" fill="none"><ellipse cx="12" cy="13" rx="11" ry="4" /><ellipse cx="12" cy="12" rx="3" ry="10" /><path d="M7 10l-3 4 4 2z" /></svg>,
  <svg key="m" viewBox="0 0 24 24" className="size-6" fill="none"><path d="M0 1h6v6H0zM8 1h6v6H8zM16 1h6v6h-6zM0 10h17v13H0z" /><path d="M6 13l6 4-6 4z" fill="#565a60" /></svg>,
];

/* ---------- chrome ---------- */

function TitleRow() {
  return (
    <div className="flex h-[26px] items-start">
      <div className="flex h-[22px] items-center gap-2 pl-[3px]">
        {qat.map(([name, icon]) => <button key={name} type="button" aria-label={name}>{icon}</button>)}
        <button type="button" aria-label="Undo"><Ic><path d="M0 8l6-5v3c5 0 9 2 9 8-2-3-5-4-9-4v3z" fill={G} /></Ic></button>
        <Arrow />
        <button type="button" aria-label="Redo"><Ic><path d="M16 8l-6-5v3c-5 0-9 2-9 8 2-3 5-4 9-4v3z" fill="#565e69" /></Ic></button>
        <span className="opacity-50"><Arrow /></span>
        <button type="button" aria-label="Customize toolbar"><svg viewBox="0 0 8 8" className="size-2"><path d="M0 0h8v1.500H0zM0 3h8L4 7z" fill={G} /></svg></button>
      </div>
      <h1 className="flex h-6 flex-1 items-center justify-center gap-3.5 whitespace-nowrap text-[#c9cdd3]"><span>Autodesk AutoCAD 2021</span><span>Drawing1.dwg</span></h1>
      <div className="flex h-[22px] items-center">
        <svg viewBox="0 0 4 8" className="mr-1.5 h-2 w-1"><path d="M0 0l4 4-4 4z" fill={G} /></svg>
        <input aria-label="Search" placeholder="Type a keyword or phrase" className="h-[21px] w-[178px] self-start bg-[#454d60] px-[3px] text-[11px] italic text-[#c3c8d0] outline-none placeholder:text-[#a9b0ba]" />
        <button type="button" aria-label="Search" className="ml-1"><Ic><circle cx="6.500" cy="6.500" r="5.500" fill="#555c66" stroke="#a9adb3" strokeWidth="1.500" /><path d="M11 11l4 4.500" stroke="#c58a5a" strokeWidth="2" /></Ic></button>
        <button type="button" className="ml-2 flex items-center gap-1.5 text-[#c9cdd3]"><Ic><circle cx="8" cy="4" r="4.500" fill="#7cc0f5" /><path d="M0 16c0-5 2-7 5-7h6c3 0 5 2 5 7z" fill="#7cc0f5" /></Ic>rita.aguiar2<span className="ml-[18px]"><Arrow /></span></button>
        <button type="button" aria-label="Store" className="ml-2.5"><Ic><path d="M0 2h3l3 9h8l2-6H4z" fill="#aeb2b7" stroke="#aeb2b7" /><circle cx="7" cy="14" r="1.500" fill="#aeb2b7" /><circle cx="13" cy="14" r="1.500" fill="#aeb2b7" /></Ic></button>
        <button type="button" aria-label="App" className="ml-2 flex items-center gap-1.5"><Ic><path d="M8 2l6 12H2z" stroke={G} strokeWidth="2.200" /><path d="M6 0h4v4H6zM0 12h4v3H0zM12 12h4v3h-4z" fill={G} /></Ic><Arrow /></button>
        <span className="ml-2.5 mr-2 h-5 w-px bg-[#3d4551]" />
        <button type="button" aria-label="Help" className="flex items-center gap-2"><Ic><circle cx="8" cy="8" r="8" fill={G} /><path d="M5.500 6a2.500 2.500 0 1 1 3.500 2.300c-.8.4-1 .8-1 1.700M8 11.500v1.500" stroke="#3b4453" strokeWidth="1.500" /></Ic><Arrow /></button>
        <div className="ml-[72px] mr-[5px] flex items-center gap-[13px]">
          <button type="button" aria-label="Minimize"><svg viewBox="0 0 8 12" className="h-3 w-2"><path d="M0 9h8v2H0z" fill={G} /></svg></button>
          <button type="button" aria-label="Restore"><svg viewBox="0 0 12 12" className="size-3" fill="none" stroke={G} strokeWidth="1.500"><path d="M3 4V1h8v5H9M1 5h8v5H1z" /></svg></button>
          <button type="button" aria-label="Close"><svg viewBox="0 0 12 12" className="size-3" stroke={G} strokeWidth="1.600"><path d="M1 1l10 10M11 1L1 11" /></svg></button>
        </div>
      </div>
    </div>
  );
}

const menu = ["Insert", "Annotate", "Parametric", "View", "Manage", "Output", "Add-ins", "Collaborate", "Express Tools", "Featured Apps"];

function Header() {
  return (
    <header className="flex h-[43px] shrink-0">
      <button type="button" aria-label="Application menu" className="flex w-[45px] shrink-0 items-start pl-[7px] pt-1">
        <svg viewBox="0 0 25 29" className="h-[29px] w-[25px]"><path d="M9 0h8l8 26-5 3-3-8H9l-3 8-6-3z" fill="#c9242b" /><path d="M13 7l3 8h-6z" fill="#222933" /><path d="M0 26l4-4 4 1-2 6zM17 21l6 0 2 5-5 3z" fill="#e2716a" /></svg>
      </button>
      <div className="flex min-w-0 flex-1 flex-col">
        <TitleRow />
        <nav className="flex h-[17px] items-center text-[#a4abb4]">
          <button type="button" className="h-full w-[51px] bg-[#3b4453] text-[12px] text-[#dde0e4]">Home</button>
          <div className="ml-[11px] flex gap-5">
            {menu.map((m) => <button type="button" key={m} className="whitespace-nowrap">{m}</button>)}
          </div>
          <button type="button" aria-label="Ribbon display" className="ml-[30px] flex items-center gap-1.5">
            <svg viewBox="0 0 16 8" className="h-2 w-4"><path d="M0 0h16v8H0z" fill="#e8e9eb" /><path d="M5 5.500h6L8 2.500z" fill="#333" /></svg><Arrow />
          </button>
        </nav>
      </div>
    </header>
  );
}

function LineCombo({ label, icon }: { label: string; icon: React.ReactNode }) {
  return (
    <div className="flex items-center gap-[3px]">
      {icon}
      <div className="relative flex h-[22px] flex-1 items-center border border-[#2f3845] bg-[#4a5669]">
        <span className="ml-[3px] h-px w-16 bg-[#d5d9de]" />
        <select aria-label={label} className="h-full flex-1 appearance-none bg-transparent pl-0.5 outline-none"><option>ByLayer</option></select>
        <span className="pointer-events-none absolute right-0.5"><Arrow big /></span>
      </div>
    </div>
  );
}

function Ribbon() {
  return (
    <div className="flex h-[98px] shrink-0 overflow-hidden bg-[#3b4453] text-[#d3d7dc]">
      <Panel title="Draw" width="w-[222px]">
        <Big label={["Line"]} width="w-[43px]" icon={LineI} />
        <Big label={["Polyline"]} width="w-[43px]" icon={PolyI} />
        <Big label={["Circle"]} width="w-[54px]" arrow icon={CircI} />
        <Big label={["Arc"]} width="w-[38px]" arrow icon={ArcI} />
        <div className="ml-1"><Row icon={RectI} arrow gap="gap-2" /><Row icon={EllI} arrow gap="gap-2" /><Row icon={HatchI} arrow gap="gap-2" /></div>
      </Panel>
      <Panel title="Modify" width="w-[253px]">
        <div className="w-1.5" />
        <Col width="w-[73px]"><Row icon={MoveI} label="Move" /><Row icon={CopyI} label="Copy" /><Row icon={StretchI} label="Stretch" /></Col>
        <Col width="w-[70px]"><Row icon={RotI} label="Rotate" /><Row icon={MirrorI} label="Mirror" /><Row icon={ScaleI} label="Scale" /></Col>
        <Col width="w-[76px]"><Row icon={TrimI} label="Trim" arrow /><Row icon={FilletI} label="Fillet" arrow /><Row icon={ArrayI} label="Array" arrow /></Col>
        <Col width="w-5"><Row icon={EraseI} /><Row icon={BoxI} /><Row icon={OffsetI} /></Col>
      </Panel>
      <Panel title="Annotation" width="w-[189px]">
        <Big label={["Text"]} width="w-[47px]" arrow icon={TextI} />
        <Big label={["Dimension"]} width="w-[58px]" icon={DimI} />
        <div className="ml-1.5"><Row icon={LinearI} label="Linear" arrow /><Row icon={LeaderI} label="Leader" arrow /><Row icon={TableI} label="Table" /></div>
      </Panel>
      <Panel title="Layers" width="w-[273px]">
        <Big label={["Layer", "Properties"]} width="w-[61px]" icon={LayerPropI} />
        <div className="flex flex-1 flex-col pr-1">
          <div className="h-[25px] pt-px">
            <div className="relative flex h-[23px] items-center gap-[3px] border border-[#2f3845] bg-[#4a5669] pl-[3px]">
              <Ic><circle cx="7" cy="6" r="5" fill={Y} /><path d="M5 11h4v4H5z" fill="#fff" /></Ic>
              <Ic><circle cx="8" cy="8" r="4.500" fill={Y} /><path d="M8 0v16M0 8h16M2.500 2.500l11 11M13.500 2.500l-11 11" stroke={Y} /></Ic>
              <Ic><rect x="1" y="7" width="11" height="8" fill={Y} /><path d="M9 7V4a3 3 0 0 1 6 0v2" stroke={Y} strokeWidth="2" /></Ic>
              <span className="ml-0.5 size-3.5 border border-black bg-white" />
              <select aria-label="Current layer" className="h-full flex-1 appearance-none bg-transparent pl-[3px] outline-none"><option>0</option></select>
              <span className="pointer-events-none absolute right-0.5"><Arrow big /></span>
            </div>
          </div>
          <div className="flex h-[25px] items-center gap-2 whitespace-nowrap pl-[3px]">
            {layerRow1.map((i, k) => <button type="button" key={k} aria-label={`Layer tool ${k + 1}`}>{i}</button>)}
            <button type="button" className="flex items-center gap-1.5">{MakeI}Make Current</button>
          </div>
          <div className="flex h-[25px] items-center gap-2 whitespace-nowrap pl-[3px]">
            {layerRow2.map((i, k) => <button type="button" key={k} aria-label={`Layer tool ${k + 5}`}>{i}</button>)}
            <button type="button" className="flex items-center gap-1.5">{MatchLI}Match Layer</button>
          </div>
        </div>
      </Panel>
      <Panel title="Block" width="w-[162px]">
        <Big label={["Insert"]} width="w-[41px]" arrow icon={InsertI} />
        <div className="ml-0.5"><Row icon={CreateI} label="Create" /><Row icon={EditI} label="Edit" /><Row icon={AttrI} label="Edit Attributes" arrow /></div>
      </Panel>
      <Panel title="Properties" width="w-[264px]" launcher>
        <Big label={["Match", "Properties"]} width="w-[61px]" icon={MatchI} />
        <div className="flex flex-1 flex-col gap-[3px] pr-[3px] pt-0.5">
          <div className="flex items-center gap-[3px]">
            {WheelI}
            <div className="relative flex h-[22px] flex-1 items-center border border-[#2f3845] bg-[#4a5669]">
              <span className="ml-[11px] size-4 bg-white" />
              <select aria-label="Object color" className="h-full flex-1 appearance-none bg-transparent pl-2.5 outline-none"><option>ByLayer</option></select>
              <span className="pointer-events-none absolute right-0.5"><Arrow big /></span>
            </div>
          </div>
          <LineCombo label="Lineweight" icon={WeightI} />
          <LineCombo label="Linetype" icon={TypeI} />
        </div>
      </Panel>
      <Panel title="Groups" width="w-[68px]">
        <Big label={["Group"]} width="w-10" icon={GroupI} />
        <div>
          <div className="px-1"><Row icon={UngI} /></div>
          <div className="px-1"><Row icon={GedI} /></div>
          <div className="flex h-[25px] items-center"><button type="button" aria-label="Group selection" className="flex h-[22px] w-6 items-center justify-center border border-[#6aaee6] bg-[#33587d]">{GselI}</button></div>
        </div>
      </Panel>
      <Panel title="Utilities" width="w-[97px]">
        <Big label={["Measure"]} width="w-[70px]" arrow icon={MeasI} />
        <div className="ml-0.5"><Row icon={QselI} /><Row icon={SelI} /><Row icon={CalcI} /></div>
      </Panel>
      <Panel title="Clipboard" width="w-[79px]" noArrow>
        <Big label={["Paste"]} width="w-[54px]" arrow icon={PasteI} />
        <div><Row icon={CutI} /><Row icon={Copy2I} /></div>
      </Panel>
      <section aria-label="View" className="flex w-16 flex-col pt-[3px] text-[12px]">
        <div className="flex h-[76px] pt-[3px]"><Big label={["Base"]} width="w-[62px]" arrow icon={BaseI} /></div>
        <div className="flex h-[19px] items-center pl-[5px] pt-0.5">
          <button type="button" className="flex items-center gap-1.5">View<Arrow big /></button>
          <button type="button" aria-label="View settings" className="ml-2"><svg viewBox="0 0 6 6" className="size-1.5"><path d="M1 1l4 4M5 1.500v3.500H1.500" stroke="#c8ccd2" fill="none" /></svg></button>
        </div>
      </section>
    </div>
  );
}

function FileTabs() {
  return (
    <div className="flex h-[30px] shrink-0 flex-col border-b-[4px] border-[#3b4453] bg-[#222933]">
      <div className="flex flex-1 items-end pl-4 text-[#aeb4bd]">
        <button type="button" className="relative h-[21px] w-[128px] rounded-t-lg bg-[#2b323e] pl-[15px] text-left">Start</button>
        <div className="relative flex h-[21px] w-[128px] items-center justify-between pl-[11px] pr-[18px]">
          <svg viewBox="0 0 134 21" preserveAspectRatio="none" className="absolute -left-1 top-0 h-full w-[134px]" aria-hidden="true"><path d="M0 21C5 18 4 0 12 0H118C126 0 126 18 134 21z" fill="#3b4453" /></svg>
          <button type="button" className="relative text-[#d8dbe0]">Drawing1*</button>
          <button type="button" aria-label="Close drawing" className="relative"><svg viewBox="0 0 9 9" className="size-[9px]" stroke="#b9bec6" strokeWidth="1.500"><path d="M.5.5l8 8M8.500.5l-8 8" /></svg></button>
        </div>
        <button type="button" aria-label="New drawing" className="ml-[3px] flex h-[18px] w-5 items-center justify-center rounded-t-md bg-[#2b323e]"><svg viewBox="0 0 9 9" className="size-[9px]" stroke="#aeb4bd" strokeWidth="1.500"><path d="M4.500 0v9M0 4.500h9" /></svg></button>
      </div>
    </div>
  );
}

function Viewport() {
  return (
    <main className="relative min-h-0 flex-1 overflow-hidden border-r border-[#6b727b] bg-[linear-gradient(#e0dffa_0px,#e0dffa_59px,#969da8_59px,#7f868e_150px,#70767e_210px,#565c64_285px,#444850_360px,#3c4048_440px,#34383e_540px,#2c3034_660px,#25282d_760px,#24262b_821px)]">
      <Scene />
      <button type="button" className="absolute left-0.5 top-[5px] whitespace-nowrap text-white/80">[−][Custom View][Conceptual]</button>
      <div className="absolute right-[7px] top-2 flex items-center gap-2 text-[#5c6069]">
        <button type="button" aria-label="Minimize view"><svg viewBox="0 0 12 12" className="size-3" fill="#fff" stroke="currentColor"><rect x=".5" y="7" width="11" height="4" /></svg></button>
        <button type="button" aria-label="Restore view"><svg viewBox="0 0 12 12" className="size-3" fill="none" stroke="currentColor" strokeWidth="1.500"><path d="M3 3V1h8v8H9M1 3h8v8H1zM4 6h2v2H4z" /></svg></button>
        <button type="button" aria-label="Close view"><svg viewBox="0 0 12 12" className="size-3" fill="none"><path d="M1 1l10 10M11 1L1 11" stroke="currentColor" strokeWidth="4.500" /><path d="M1 1l10 10M11 1L1 11" stroke="#fff" strokeWidth="2" /></svg></button>
      </div>
      <div className="absolute right-3 top-[78px]"><ViewCube /></div>
      <button type="button" className="absolute right-[59px] top-[193px] flex h-4 w-[46px] items-center gap-1.5 rounded border border-[#c5cad6] bg-[#b3b8c4] pl-[3px] font-['Liberation_Sans'] text-[10px] text-[#6b717d]">
        WCS<svg viewBox="0 0 8 4" className="h-1 w-2" fill="none" stroke="#dfe2e9"><path d="M0 0h8L4 4z" /></svg>
      </button>
      <div className="absolute right-0.5 top-[232px] flex h-[209px] w-[33px] flex-col items-center gap-3 rounded border border-[#4a4e54] bg-[#93969a]/60 pt-4 [stroke:#565a60]">
        {navIcons.map((i, k) => <button type="button" key={k} aria-label={`Navigation tool ${k + 1}`}>{i}</button>)}
      </div>
      <div className="absolute bottom-0 left-[20%] right-[20%] flex h-[25px]">
        <div className="flex w-[55px] items-center gap-[5px] bg-[#2a303b] pl-[3px]">
          <svg viewBox="0 0 6 18" className="h-[18px] w-1.5"><path d="M1 0v18M5 0v18" stroke="#aeb4bd" strokeWidth="1.500" strokeDasharray="1.500 1.500" /></svg>
          <button type="button" aria-label="Close command line"><svg viewBox="0 0 9 9" className="size-[9px]" stroke="#c8ccd2" strokeWidth="1.500"><path d="M.5.5l8 8M8.500.5l-8 8" /></svg></button>
          <button type="button" aria-label="Customize" className="ml-1.5"><svg viewBox="0 0 15 15" className="size-[15px]"><path d="M1 14L9 6" stroke="#c8ccd2" strokeWidth="3" /><path d="M11 0a4 4 0 1 0 4 5l-3 1-2-2z" fill="#c8ccd2" /></svg></button>
        </div>
        <div className="flex flex-1 items-center rounded-sm bg-[#bcbfc0] pl-[3px] pr-[5px]">
          <button type="button" aria-label="Recent commands" className="flex items-center gap-0.5">
            <svg viewBox="0 0 17 13" className="h-[13px] w-[17px]" fill="none"><path d="M.5.5h16v12H.5z" fill="#c9cccd" stroke="#6b6f73" /><path d="M0 0h17v4H0z" fill="#5c6064" /><path d="M3 6l2 1.500L3 9M7 10h3" stroke="#6b6f73" /></svg>
            <svg viewBox="0 0 8 5" className="h-[5px] w-2"><path d="M0 0h8L4 5z" fill="#4a4e52" /></svg>
          </button>
          <input aria-label="Command" placeholder="Type a command" className="ml-1.5 min-w-0 flex-1 bg-transparent font-['DejaVu_Sans_Mono'] text-xs italic text-[#333] outline-none placeholder:text-[#66696c]" />
          <button type="button" aria-label="Command history"><svg viewBox="0 0 8 4" className="h-1 w-2"><path d="M0 4h8L4 0z" fill="#4a4e52" /></svg></button>
        </div>
      </div>
    </main>
  );
}

function LayoutTabs() {
  const shape = "flex h-[17px] items-center justify-center rounded-b-md [clip-path:polygon(0_0,100%_0,calc(100%-5px)_100%,5px_100%)]";
  return (
    <div className="flex h-[22px] shrink-0 items-start border-t-2 border-[#303744] pl-2 text-[#aeb4bd]">
      <button type="button" className={`${shape} w-[63px] bg-[#3b4453] font-bold text-white`}>Model</button>
      <button type="button" className={`${shape} w-[63px] bg-[#2f3744]`}>Layout1</button>
      <button type="button" className={`${shape} w-[66px] bg-[#2f3744]`}>Layout2</button>
      <button type="button" aria-label="New layout" className={`${shape} ml-[3px] w-[23px] bg-[#2f3744]`}><svg viewBox="0 0 9 9" className="size-[9px]" stroke="#c3c8d0" strokeWidth="1.500"><path d="M4.500 0v9M0 4.500h9" /></svg></button>
    </div>
  );
}

function Cell({ children, on, name }: Kids & { on?: boolean; name: string }) {
  return <button type="button" aria-label={name} className={`flex h-6 w-6 items-center justify-center ${on ? "bg-[#5b8bc6]" : ""}`}>{children}</button>;
}
const Seg = ({ children }: Kids) => <div className="flex h-6 items-center bg-[#353e4c]">{children}</div>;
const Drop = () => <span className="flex w-4 justify-center"><Arrow big /></span>;

const annoPath = "M8 0L10.500 7L15 15L9.500 12L8 16L6.500 12L1 15L5.500 7z";

function StatusBar() {
  const W = "#eef1f5";
  return (
    <footer className="flex h-[26px] shrink-0 items-start justify-end gap-[3px] pr-px text-[#d8dbe0]">
      <Seg><button type="button" className="w-[47px] text-[12px]">MODEL</button></Seg>
      <Seg>
        <Cell name="Grid" on><Ic><path d="M4 1v14M8 1v14M12 1v14M1 4h14M1 8h14M1 12h14" stroke={W} /></Ic></Cell>
        <Cell name="Snap"><Ic><path d="M3 2v14M8 2v14M13 2v14" stroke={G} strokeWidth="2" strokeDasharray="2 3" /></Ic></Cell><Drop />
      </Seg>
      <Seg>
        <Cell name="Ortho"><Ic><path d="M1 0v15h15M1 11h4v4" stroke="#a9afb8" /></Ic></Cell>
        <Cell name="Polar" on><Ic><circle cx="7" cy="9" r="6" stroke={W} /><path d="M7 9h8M7 9l6-8M11 6l0 5" stroke={W} /></Ic></Cell><Drop />
        <Cell name="Isodraft"><Ic><path d="M9 0v16" stroke="#4f9a58" /><path d="M1 2l14 12" stroke="#9aa1ab" /><path d="M8 8l5 5" stroke="#a04848" /></Ic></Cell><Drop />
        <Cell name="Tracking" on><Ic><path d="M15 1L1 14h15" stroke={W} /><rect x="6" y="8" width="2.500" height="2.500" fill={W} /></Ic></Cell>
        <div className="w-px" />
        <Cell name="Object snap" on><Ic><rect x="2.500" y="3" width="12" height="12" stroke={W} /><rect x="0" y="0" width="5" height="5" fill="#5b8bc6" stroke={W} /></Ic></Cell><Drop />
      </Seg>
      <Seg>
        <Cell name="Annotation visibility" on><Ic><path d={annoPath} fill="#fff" /><circle cx="13" cy="3" r="2.500" stroke={W} /></Ic></Cell>
        <Cell name="Auto scale"><Ic><path d={annoPath} fill={G} /><path d="M13 0l-1 3h3l-2 3" stroke={G} /></Ic></Cell>
        <Cell name="Annotation scale"><Ic><path d={annoPath} fill="#8e949d" /></Ic></Cell>
        <button type="button" className="flex w-[33px] items-center justify-center gap-1.5 text-[#a9afb8]">1:1<Arrow /></button>
      </Seg>
      <Seg>
        <Cell name="Workspace"><Ic><circle cx="8" cy="8" r="4.500" stroke={G} strokeWidth="3" /><path d="M8 0v3M8 13v3M0 8h3M13 8h3M2.500 2.500l2 2M11.500 11.500l2 2M13.500 2.500l-2 2M4.500 11.500l-2 2" stroke={G} strokeWidth="3" /></Ic></Cell>
        <span className="flex w-3.5 justify-center"><Arrow big /></span>
      </Seg>
      <Seg><Cell name="Monitor"><Ic><path d="M8 1v14M1 8h14" stroke={G} strokeWidth="2" /></Ic></Cell></Seg>
      <Seg><Cell name="Isolate"><Ic><rect x="0" y="0" width="6" height="6" stroke="#b9bec6" /><circle cx="13" cy="7" r="3" stroke="#b9bec6" /><path d="M6.500 9.500l3.500 6H3z" stroke="#b9bec6" /></Ic></Cell></Seg>
      <span className="h-6 w-px bg-[#3b4453]" />
      <Seg>
        <Cell name="Clean screen"><Ic><rect x="0" y="2" width="16" height="12" stroke="#b9bec6" /><path d="M10 4h4v4zM6 12H2V8z" fill={G} /></Ic></Cell>
        <Cell name="Customization"><Ic><path d="M0 2h16M0 8h16M0 14h16" stroke={G} strokeWidth="2" /></Ic></Cell>
      </Seg>
    </footer>
  );
}

export default function App() {
  return (
    <div className="flex h-screen flex-col overflow-hidden bg-[#222933] font-['Noto_Sans',sans-serif] text-[11px] leading-4">
      <Header />
      <Ribbon />
      <FileTabs />
      <Viewport />
      <LayoutTabs />
      <StatusBar />
      <div className="flex h-[7px] shrink-0 justify-center bg-[#1b1d1d]"><div className="mr-[26%] w-12 bg-[#48494a]" /></div>
    </div>
  );
}
